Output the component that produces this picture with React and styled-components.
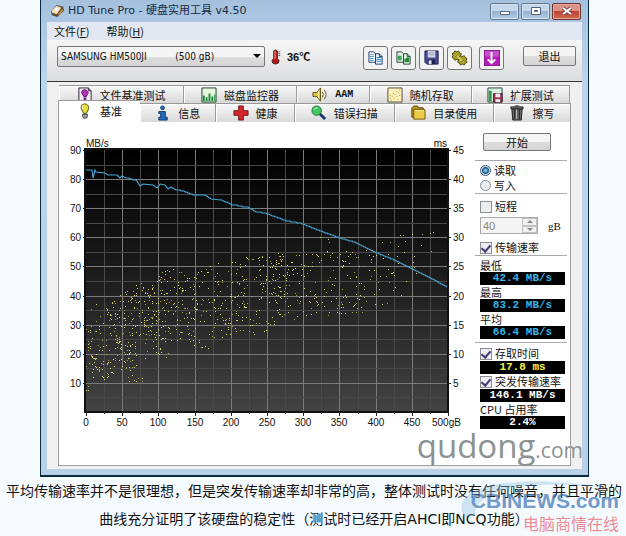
import React from 'react';
import styled, { createGlobalStyle, css } from 'styled-components';

const PLOT = { left: 27, top: 28, width: 362, height: 262 };

const CURVE = [
  [0, 20], [6, 20], [7, 28], [9, 20], [10, 22], [19, 23], [22, 25], [31, 25],
  [34, 28], [36, 26], [40, 28], [51, 31], [54, 36], [57, 34], [67, 35],
  [71, 38], [74, 34], [79, 35], [82, 39], [85, 37], [90, 40], [99, 42],
  [107, 45], [118, 45], [125, 49], [135, 50], [146, 55], [163, 58], [170, 62],
  [181, 64], [200, 71], [216, 74], [234, 81], [253, 88], [270, 93], [290, 103],
  [308, 110], [326, 119], [344, 128], [361, 137],
];

// whole-pixel stairs on the long slopes, the short dips stay as they are
const curvePath = CURVE.reduce((path, [x, y], i) => {
  if (!i) return `M${x} ${y}`;
  const [px, py] = CURVE[i - 1];
  const steps = y - py;
  if (steps < 2 || x - px < 7) return `${path}L${x} ${y}`;
  const stairs = Array.from({ length: steps }, (_, n) => {
    const sx = px + Math.round(((n + 1) * (x - px)) / steps);
    return `L${sx - 1} ${py + n}L${sx} ${py + n + 1}`;
  });
  return path + stairs.join('');
}, '');

// x start, x end, top at start, top at end, bottom at start, bottom at end, count
const CLOUD = [
  [0, 12, 165, 150, 245, 222, 42],
  [12, 32, 154, 148, 232, 222, 88],
  [32, 50, 146, 132, 220, 222, 100],
  [50, 58, 138, 130, 210, 190, 22],
  [58, 76, 134, 124, 212, 206, 100],
  [76, 112, 118, 118, 192, 196, 130],
  [112, 146, 120, 106, 204, 184, 88],
  [146, 182, 108, 102, 190, 180, 100],
  [182, 202, 100, 104, 176, 168, 86],
  [202, 238, 104, 100, 172, 162, 68],
  [238, 276, 100, 100, 166, 162, 72],
  [276, 314, 96, 96, 158, 152, 34],
];

const STRAYS = [
  [42, 227], [43, 231], [50, 231], [52, 228], [56, 228], [48, 230], [56, 231],
  [46, 225], [80, 207], [82, 203], [242, 89], [234, 87], [243, 92], [260, 101],
  [314, 85], [317, 85], [319, 91], [326, 84], [336, 84], [344, 83], [347, 82],
  [345, 101], [335, 95], [312, 96], [304, 92], [296, 92], [327, 112],
  [328, 117], [330, 123], [315, 145], [326, 144], [302, 104], [302, 119],
  [359, 116], [318, 102], [328, 106], [300, 126], [320, 131],
];

const seeded = start => {
  let seed = start;
  return () => {
    seed = (seed * 16807) % 2147483647;
    return seed / 2147483647;
  };
};

const random = seeded(4502);

const samples = CLOUD.flatMap(([x1, x2, t1, t2, b1, b2, count]) =>
  Array.from({ length: count }, () => {
    const k = random();
    const top = t1 + (t2 - t1) * k;
    const bottom = b1 + (b2 - b1) * k;
    return [
      Math.round(x1 + (x2 - x1) * k),
      Math.round(top + (bottom - top) * random()),
    ];
  })
).concat(STRAYS);

const ticks = Array.from({ length: 9 }, (_, i) => i);

const BenchmarkChart = () => {
  const { left, top, width, height } = PLOT;
  const xs = Array.from({ length: 19 }, (_, i) =>
    Math.round((i + 1) * (width / 20))
  );
  const ys = Array.from({ length: 17 }, (_, i) =>
    Math.round((i + 1) * (height / 18))
  );

  return (
    <Chart viewBox='0 0 416 343' role='img' aria-label='HD Tune benchmark'>
      <defs>
        <linearGradient id='plot' x1='0' y1='0' x2='0' y2='1'>
          <stop offset='0' stopColor='#000' />
          <stop offset='0.5' stopColor='#1d1d1d' />
          <stop offset='1' stopColor='#434343' />
        </linearGradient>
      </defs>
      <text x={left} y='25'>MB/s</text>
      <text x={left + width - 1} y='25' textAnchor='end'>ms</text>
      {ticks.map(i => (
        <React.Fragment key={i}>
          <text x='22' y={32 + Math.round(i * 29.1)} textAnchor='end'>
            {90 - i * 10}
          </text>
          <text x='394' y={32 + Math.round(i * 29.1)}>
            {45 - i * 5}
          </text>
        </React.Fragment>
      ))}
      {Array.from({ length: 10 }, (_, i) => (
        <text
          key={i}
          x={left + Math.round(i * 36.2)}
          y='304'
          textAnchor='middle'
        >
          {i * 50}
        </text>
      ))}
      <text x='373' y='304'>500gB</text>
      <g transform={`translate(${left} ${top})`} shapeRendering='crispEdges'>
        <rect width={width} height={height} fill='url(#plot)' />
        {xs.map((x, i) => (
          <rect
            key={x}
            x={x}
            width='1'
            height={height}
            fill={i % 2 ? '#7a7a7a' : '#484848'}
          />
        ))}
        {ys.map((y, i) => (
          <rect
            key={y}
            y={y}
            width={width}
            height='1'
            fill={i % 2 ? '#7a7a7a' : '#484848'}
          />
        ))}
        <path
          d={`M-1 -1H${width}V${height}H-1Z`}
          fill='none'
          stroke='#111'
          strokeWidth='2'
        />
        {Array.from({ length: 21 }, (_, i) => (
          <rect
            key={i}
            x={Math.round(i * 18.1)}
            y={height}
            width='1'
            height={i % 2 ? 2 : 4}
            fill='#222'
          />
        ))}
        {ticks.map(i => (
          <path
            key={i}
            d={`M-3 ${Math.round(i * 29.1)}h3M${width} ${Math.round(
              i * 29.1
            )}h3`}
            stroke='#222'
          />
        ))}
        {samples.map(([x, y], i) => (
          <rect
            key={i}
            x={x}
            y={y}
            width='1'
            height='1'
            fill={i % 3 ? '#dcd66c' : '#a8a44c'}
          />
        ))}
      </g>
      <path
        transform={`translate(${left} ${top})`}
        d={curvePath}
        fill='none'
        stroke='#45a8d8'
        strokeWidth='1.1'
      />
    </Chart>
  );
};

const icons = {
  app: (
    <>
      <path d='M1 9 7 2l7 2 1 4-7 7-6-2z' fill='#5a4a3c' />
      <path d='M2 8 7 3l5 2-5 7-5-2z' fill='#f3dfba' />
      <path d='m9 11 4-5 1 2-5 6z' fill='#c98c35' />
      <circle cx='7' cy='7' r='2' fill='#fff' />
    </>
  ),
  thermo: (
    <>
      <path d='M6 2q2-2 4 0v8q3 2 1 5-3 2-6 0-2-3 1-5z' fill='#b51212' stroke='#4d3030' />
      <path d='M7 2h1v9H7z' fill='#f3b5b5' />
      <path d='M11 3h2M11 5h2M11 7h2' stroke='#555' />
    </>
  ),
  copy: (
    <>
      <path d='M1 2h5l2 2v9H1z' fill='#fff' stroke='#183a68' />
      <path d='M2 5h4M2 7h4M2 9h4M2 11h4' stroke='#4285b8' />
      <path d='M8 4h4l3 3v8H8z' fill='#e7f4ff' stroke='#183a68' />
      <path d='M9 8h5M9 10h5M9 12h5' stroke='#3279b0' />
      <path d='M12 4v3h3' fill='none' stroke='#183a68' />
    </>
  ),
  copyImage: (
    <>
      <path d='M1 2h5l2 2v9H1z' fill='#e7f5e6' stroke='#263f34' />
      <path d='M2 6h4v5H2z' fill='#42a552' />
      <path d='M8 4h4l3 3v8H8z' fill='#e3f6e3' stroke='#263f34' />
      <path d='M9 9h2v-1h3v5H9z' fill='#238b37' />
      <path d='M12 4v3h3' fill='none' stroke='#263f34' />
    </>
  ),
  save: (
    <>
      <path d='M1 1h14v14H3l-2-2z' fill='#4b4e9e' stroke='#171947' />
      <path d='M4 1h8v7H4z' fill='#d5d8e2' />
      <path d='M5 3h6M5 5h6' stroke='#999caf' />
      <path d='M4 10h8v5H4z' fill='#1f204d' />
      <path d='M5 11h3v4H5z' fill='#e8e8f0' />
    </>
  ),
  gears: (
    <>
      <g fill='#aaa028' stroke='#4c470b'>
        <path d='m2 3 1-2 2 1 2-1 1 2 2 1-1 2 1 2-2 1-1 2-2-1-2 1-1-2-2-1 1-2-1-2z' />
        <path d='m8 8 1-2 2 1 2-1 1 2 2 1-1 2 1 2-2 1-1 2-2-1-2 1-1-2-2-1z' />
      </g>
      <path d='m4 5 8 8' stroke='#d2ca62' strokeWidth='2' />
      <path d='m4 7 2-2M10 13l2-2' stroke='#4c470b' />
    </>
  ),
  down: (
    <>
      <path d='M0 0h17v17H0z' fill='#b21fb7' stroke='#681070' />
      <path d='M1 1h15v6H1z' fill='#c84fcb' />
      <path d='M8 2v12M4 10l4 4 4-4' fill='none' stroke='#fff' strokeWidth='2' />
    </>
  ),
  bulb: (
    <>
      <path d='M8 1C4 1 4 5 5 7l2 4h3l2-4c1-3 0-6-4-6z' fill='#e4df36' stroke='#504e16' />
      <path d='M7 3q-2 1-1 3' fill='none' stroke='#fff' />
      <path d='M6 12h5v2l-1 2H7l-1-2z' fill='#aaa' stroke='#333' />
    </>
  ),
  fileBulb: (
    <>
      <path d='M2 1h10l3 3v12H2z' fill='#f4eef8' stroke='#2d1935' />
      <path d='M12 1v3h3' fill='none' stroke='#2d1935' />
      <path d='M8 3C5 3 4 6 6 8l1 2h3l1-2c2-2 0-5-3-5z' fill='#b334bd' stroke='#54145b' />
      <path d='M7 11h3v3H7z' fill='#7b2484' />
    </>
  ),
  bars: (
    <>
      <path d='M1 1h15v15H1z' fill='#e7f7dd' stroke='#183d22' />
      <path d='M2 9h2v6H2zM5 11h2v4H5zM8 7h2v8H8zM11 10h2v5h-2zM14 8h1v7h-1z' fill='#198a38' />
    </>
  ),
  speaker: (
    <>
      <path d='M1 6h4l4-5v14l-4-5H1z' fill='#e5ce41' stroke='#5b4b0b' />
      <path d='M7 4v8' stroke='#fff09a' />
      <path d='M11 5q2 3 0 6M13 3q4 5 0 10' fill='none' stroke='#625216' />
    </>
  ),
  scatter: (
    <>
      <path d='M1 1h15v15H1z' fill='#fff2be' stroke='#4d482d' />
      <path d='M3 12h1M5 10h1M4 14h1M7 12h1M8 8h1M10 10h1M12 6h1M11 13h1M13 9h1M6 7h1M10 5h1M3 9h1M13 3h1' stroke='#b98f23' />
    </>
  ),
  extra: (
    <>
      <path d='M1 1h15v15H1z' fill='#daf4e2' stroke='#203f2d' />
      <path d='M2 4h3v11H2z' fill='#2c9a48' />
      <path d='M7 7h9v9H7z' fill='#9c395a' stroke='#41192b' />
      <path d='M9 7h5v4H9zM9 13h5v3H9z' fill='#f7eaf0' />
    </>
  ),
  info: (
    <>
      <circle cx='8' cy='3' r='2' fill='#2874c7' stroke='#123868' />
      <path d='M4 7h7v6h2v3H4v-3h2V9H4z' fill='#246bbd' stroke='#123868' />
    </>
  ),
  cross: <path d='M6 1h5v5h5v5h-5v5H6v-5H1V6h5z' fill='#d4262b' stroke='#6b1516' />,
  magnifier: (
    <>
      <path d='m9 9 6 6' stroke='#17346d' strokeWidth='3' />
      <circle cx='6' cy='6' r='5' fill='#43c75c' stroke='#286b38' />
      <path d='M3 5q1-2 4-2' fill='none' stroke='#d3ffd1' />
    </>
  ),
  folder: (
    <>
      <path d='M2 3 4 1h4l1 2h5v10H2z' fill='#b69121' stroke='#5a4305' />
      <path d='M4 5h12v10H4z' fill='#edcc4c' stroke='#72570c' />
      <path d='M5 6h10' stroke='#fff09b' />
    </>
  ),
  trash: (
    <>
      <path d='M3 4h11l-1 12H4z' fill='#666' stroke='#1d1d1d' />
      <path d='M2 2h13v2H2zM6 1h5' fill='#777' stroke='#222' />
      <path d='M6 5v10M11 5v10' stroke='#222' />
      <path d='M8 5v10' stroke='#bbb' />
    </>
  ),
};

const Icon = ({ name }) => (
  <Glyph viewBox='0 0 17 17' aria-hidden='true'>
    {icons[name]}
  </Glyph>
);

const BACK_TABS = [
  { icon: 'fileBulb', label: '文件基准测试', size: 125 },
  { icon: 'bars', label: '磁盘监控器', size: 113 },
  { icon: 'speaker', label: 'AAM', size: 72, mono: true },
  { icon: 'scatter', label: '随机存取', size: 102 },
  { icon: 'extra', label: '扩展测试', size: 98 },
];

const FRONT_TABS = [
  { icon: 'bulb', label: '基准', size: 82, active: true },
  { icon: 'info', label: '信息', size: 76 },
  { icon: 'cross', label: '健康', size: 78 },
  { icon: 'magnifier', label: '错误扫描', size: 100 },
  { icon: 'folder', label: '目录使用', size: 99 },
  { icon: 'trash', label: '擦写', size: 77 },
];

const Tabs = ({ items, back }) => (
  <TabRow role='tablist' $back={back}>
    {items.map(({ icon, label, size, active, mono }) => (
      <Tab
        key={label}
        role='tab'
        aria-selected={!!active}
        $size={size}
        $active={active}
        $mono={mono}
      >
        <Icon name={icon} />
        {label}
      </Tab>
    ))}
  </TabRow>
);

const Result = ({ label, value, color }) => (
  <>
    <ResultLabel>{label}</ResultLabel>
    <Lcd $color={color}>{value}</Lcd>
  </>
);

const App = () => (
  <>
    <GlobalStyle />
    <Window>
      <TitleBar>
        <Icon name='app' />
        <Title>HD Tune Pro - 硬盘实用工具 v4.50</Title>
        <Caption aria-label='minimize'>
          <svg width='28' height='16'>
            <path d='M9.5 8.5h9v3h-9z' fill='#fff' stroke='#56677b' />
          </svg>
        </Caption>
        <Caption aria-label='maximize'>
          <svg width='28' height='16'>
            <path d='M9.5 4.5h9v7h-9z' fill='#fff' stroke='#56677b' />
            <path d='M12.5 7.5h3v1h-3z' fill='#91aac5' stroke='#56677b' />
          </svg>
        </Caption>
        <Caption aria-label='close' $close>
          <svg width='28' height='16'>
            <path d='m10 5 8 6m0-6-8 6' stroke='#713c38' strokeWidth='4' />
            <path d='m10 5 8 6m0-6-8 6' stroke='#fff' strokeWidth='2' />
          </svg>
        </Caption>
      </TitleBar>
      <Client>
        <Menu>
          <MenuItem>文件(<u>F</u>)</MenuItem>
          <MenuItem>帮助(<u>H</u>)</MenuItem>
        </Menu>
        <Toolbar>
          <DriveBox>
            <Drive aria-label='drive'>
              <option>
                {`SAMSUNG HM500JI${'\u00a0'.repeat(10)}(500 gB)`}
              </option>
            </Drive>
            <Arrow viewBox='0 0 8 4' aria-hidden='true'>
              <path d='M0 0h8L4 4z' />
            </Arrow>
          </DriveBox>
          <Icon name='thermo' />
          <Temperature>36℃</Temperature>
          <Tools>
            {['copy', 'copyImage', 'save', 'gears'].map(name => (
              <Tool key={name} aria-label={name}>
                <Icon name={name} />
              </Tool>
            ))}
          </Tools>
          <Tool aria-label='down'>
            <Icon name='down' />
          </Tool>
          <ExitButton>退出</ExitButton>
        </Toolbar>
        <Content>
          <Tabs items={BACK_TABS} back />
          <Tabs items={FRONT_TABS} />
          <Panel>
            <BenchmarkChart />
            <Side>
              <StartButton>开始</StartButton>
              <Group>
                <Option>
                  <Radio name='mode' defaultChecked />
                  读取
                </Option>
                <Option>
                  <Radio name='mode' />
                  写入
                </Option>
              </Group>
              <Group $roomy>
                <Option>
                  <Check />
                  短程
                </Option>
                <SizeRow>
                  <Spinner>
                    <SizeInput defaultValue='40' disabled aria-label='gB' />
                    <Steps>
                      <Step disabled aria-label='up'>
                        <svg viewBox='0 0 6 3'><path d='M0 3h6L3 0z' /></svg>
                      </Step>
                      <Step disabled aria-label='down'>
                        <svg viewBox='0 0 6 3'><path d='M0 0h6L3 3z' /></svg>
                      </Step>
                    </Steps>
                  </Spinner>
                  gB
                </SizeRow>
                <Option>
                  <Check defaultChecked />
                  传输速率
                </Option>
              </Group>
              <Group>
                <Result label='最低' value='42.4 MB/s' color='#35b3e6' />
                <Result label='最高' value='83.2 MB/s' color='#35b3e6' />
                <Result label='平均' value='66.4 MB/s' color='#35b3e6' />
              </Group>
              <Spacer />
              <Group $last>
                <Option>
                  <Check defaultChecked />
                  存取时间
                </Option>
                <Lcd $color='#f5f545'>17.8 ms</Lcd>
                <Option>
                  <Check defaultChecked />
                  突发传输速率
                </Option>
                <Lcd $color='#fff'>146.1 MB/s</Lcd>
                <Result label='CPU 占用率' value='2.4%' color='#fff' />
              </Group>
            </Side>
          </Panel>
        </Content>
      </Client>
      <Watermark>
        qudong<small>.com</small>
      </Watermark>
    </Window>
    <Article>
      <p>
        平均传输速率并不是很理想，但是突发传输速率却非常的高，整体测试时没有任何噪音，并且平滑的曲线充分证明了该硬盘的稳定性（测试时已经开启AHCI即NCQ功能）
      </p>
      <Brand>
        <Swoosh viewBox='0 0 160 50' aria-hidden='true'>
          <path d='M5 40C-12 8 55-4 152 11 80 2 15 10 16 38z' fill='#93c4e7' />
        </Swoosh>
        <BrandName>CBINEWS.com</BrandName>
        <BrandSub>电脑商情在线</BrandSub>
      </Brand>
    </Article>
  </>
);

const GlobalStyle = createGlobalStyle`
  * {
    box-sizing: border-box;
  }
  body {
    margin: 0;
    background: #f4fafe;
    color: #111;
    font: 11px 'Noto Sans CJK SC', sans-serif;
  }
  button, input, select {
    font: inherit;
    color: inherit;
    margin: 0;
    padding: 0;
  }
`;

const Window = styled.main`
  position: relative;
  margin: 0 37px 0 40px;
  padding: 0 6px 6px;
  border: solid #0b2a3b;
  border-width: 0 1px 2px;
  background: linear-gradient(#a5c1de, #bdd4ec 80px, #b9d1e8);
`;
const TitleBar = styled.header`
  display: flex;
  align-items: center;
  height: 22px;
  padding: 0 1px 0 3px;
  gap: 2px;
`;
const Glyph = styled.svg`
  width: 16px;
  height: 16px;
  flex: none;
`;
const Title = styled.h1`
  flex: 1;
  margin: 0;
  font: 11px/22px 'DejaVu Sans', 'Noto Sans CJK SC', sans-serif;
  color: #182b40;
`;
const Caption = styled.button`
  height: 17px;
  width: 29px;
  display: flex;
  align-items: center;
  justify-content: center;
  border: 1px solid #61788f;
  border-radius: 2px;
  box-shadow: inset 0 0 0 1px #d5e3f1;
  background: linear-gradient(#c3d6ea 50%, #93b1d0 50%, #b4cde5);
  ${({ $close }) =>
    $close &&
    css`
      border-color: #6b3532;
      box-shadow: inset 0 0 0 1px #e5a59a;
      background: linear-gradient(#dc9385 50%, #bd4432 50%, #cf6b52);
    `}
`;
const Client = styled.div`
  background: #f0f0f1;
`;
const Menu = styled.nav`
  display: flex;
  gap: 17px;
  height: 18px;
  padding-left: 7px;
  background: #e1e8f1;
`;
const MenuItem = styled.button`
  border: 0;
  background: none;
  line-height: 18px;
`;
const Toolbar = styled.div`
  display: flex;
  align-items: flex-start;
  height: 42px;
  padding: 6px 6px 0 10px;
  background: linear-gradient(#f6f6f6, #dcdddf);
  border-bottom: 1px solid #333;

  > ${Glyph} {
    margin: 3px 3px 0;
  }
`;
const face = css`
  border: 1px solid #777;
  border-radius: 2px;
  background: linear-gradient(#f5f5f5 50%, #dedede 50%, #d4d4d4);
`;
const DriveBox = styled.div`
  position: relative;
  flex: 0 1 208px;
`;
const Drive = styled.select`
  ${face}
  appearance: none;
  width: 100%;
  height: 21px;
  padding-left: 3px;
  font: 10px 'DejaVu Sans Condensed', sans-serif;
`;
const Arrow = styled.svg`
  position: absolute;
  right: 4px;
  top: 8px;
  width: 8px;
  height: 4px;
`;
const Temperature = styled.b`
  flex: 1;
  font: bold 11px/22px 'Liberation Sans', 'Noto Sans CJK SC', sans-serif;
`;
const Tools = styled.div`
  display: flex;
  gap: 3px;
  margin-right: 7px;
`;
const Tool = styled.button`
  display: flex;
  align-items: center;
  justify-content: center;
  width: 25px;
  height: 24px;
  border: 1px solid #777;
  border-radius: 3px;
  background: #f2f2f2;
`;
const ExitButton = styled.button`
  ${face}
  width: 53px;
  height: 20px;
  margin-left: 19px;
  line-height: 18px;
`;
const Content = styled.div`
  padding: 3px 11px 3px;
`;
const TabRow = styled.div`
  display: flex;
  align-items: flex-end;
  height: ${({ $back }) => ($back ? 18 : 19)}px;
  padding: ${({ $back }) => ($back ? '0 1px' : 0)};
`;
const Tab = styled.button`
  display: flex;
  align-items: center;
  justify-content: center;
  gap: 7px;
  flex: ${({ $size }) => $size} 1 0;
  height: 100%;
  border: 1px solid #999;
  border-width: 1px 1px 0 0;
  background: linear-gradient(#f8f8f8, #d9d9da);
  box-shadow: inset 1px 1px #fff;
  white-space: nowrap;
  ${({ $mono }) =>
    $mono &&
    css`
      font: bold 10px 'Liberation Mono', monospace;
    `}
  ${({ $active }) =>
    $active &&
    css`
      height: 22px;
      padding-bottom: 2px;
      border-width: 1px 0 0 1px;
      background: #fff;
    `}
`;
const Panel = styled.div`
  display: flex;
  align-items: flex-start;
  padding-right: 3px;
  border: 1px solid #a0a0a0;
  border-top: 0;
  background: #fff;
`;
const Chart = styled.svg`
  flex: 1;
  min-width: 0;
  font: 10px 'Liberation Sans', sans-serif;
  fill: #111;
`;
const Side = styled.div`
  flex: none;
  width: 92px;
  padding-top: 11px;
`;
const StartButton = styled.button`
  ${face}
  display: block;
  width: 68px;
  height: 18px;
  margin: 0 0 9px 8px;
  line-height: 16px;
`;
const Group = styled.div`
  padding: ${({ $roomy, $last }) =>
    $roomy ? '5px 2px 0 5px' : $last ? '3px 2px 0 5px' : '2px 2px 0 5px'};
  border-top: 1px solid #aaa;
`;
const Spacer = styled.div`
  height: 3px;
`;
const Option = styled.label`
  display: flex;
  align-items: center;
  gap: 3px;
  height: 15px;
  line-height: 15px;
  white-space: nowrap;
`;
const Radio = styled.input.attrs({ type: 'radio' })`
  appearance: none;
  flex: none;
  width: 11px;
  height: 11px;
  border: 1px solid #858c94;
  border-radius: 50%;
  background: #eceeef;
  &:checked {
    border-color: #35597b;
    background: radial-gradient(circle, #6fc0e5 0 1px, #184f7c 3px, #dce8f0 4px);
  }
`;
const Check = styled.input.attrs({ type: 'checkbox' })`
  appearance: none;
  flex: none;
  display: grid;
  place-items: center;
  width: 12px;
  height: 12px;
  border: 1px solid #8b8f94;
  background: #ecedef;
  &:checked::after {
    content: '';
    width: 4px;
    height: 7px;
    margin-bottom: 2px;
    border: solid #413b78;
    border-width: 0 2px 2px 0;
    transform: rotate(40deg);
  }
`;
const SizeRow = styled.div`
  display: flex;
  align-items: center;
  gap: 10px;
  margin: 3px 0 6px;
  font: 11px 'Liberation Serif', serif;
`;
const Spinner = styled.div`
  display: flex;
  width: 58px;
  height: 17px;
  border: 1px solid #aaa;
  background: #f4f4f4;
`;
const SizeInput = styled.input`
  flex: 1;
  min-width: 0;
  padding-left: 2px;
  border: 0;
  background: none;
  font: 11px 'Liberation Sans', sans-serif;
  color: #888;
`;
const Steps = styled.div`
  display: flex;
  flex-direction: column;
  width: 15px;
`;
const Step = styled.button`
  display: flex;
  align-items: center;
  justify-content: center;
  flex: 1;
  min-height: 0;
  border: 1px solid #c2c2c2;
  background: #f0f0f0;
  svg {
    width: 6px;
    height: 3px;
    fill: #888;
  }
`;
const ResultLabel = styled.div`
  height: 14px;
  line-height: 14px;
`;
const Lcd = styled.output`
  display: block;
  height: 13px;
  background: #000;
  color: ${({ $color }) => $color};
  font: bold 11px/13px 'Liberation Mono', monospace;
  text-align: center;
`;
const Watermark = styled.div`
  position: absolute;
  right: 5px;
  bottom: 7px;
  font: 33px/36px 'Open Sans', sans-serif;
  color: #8c9292;
  pointer-events: none;
  small {
    font-size: 21px;
  }
`;
const Article = styled.article`
  position: relative;
  padding: 0 3px 4px 5px;
  text-align: center;
  font: 14px/28px 'DejaVu Sans', 'Noto Sans CJK SC', sans-serif;
  p {
    margin: 0;
  }
`;
const Brand = styled.div`
  position: absolute;
  right: 7px;
  top: 0;
  text-align: right;
  opacity: 0.65;
  pointer-events: none;
`;
const Swoosh = styled.svg`
  position: absolute;
  right: 0;
  top: 0;
  width: 160px;
  height: 50px;
  opacity: 0.6;
`;
const BrandName = styled.div`
  position: relative;
  margin-top: 12px;
  font: bold 21px/24px 'Liberation Sans', sans-serif;
  color: #2f67ad;
`;
const BrandSub = styled.div`
  position: relative;
  font: 16px/20px 'Noto Sans CJK SC', sans-serif;
  color: #e8525f;
`;

export default App;
